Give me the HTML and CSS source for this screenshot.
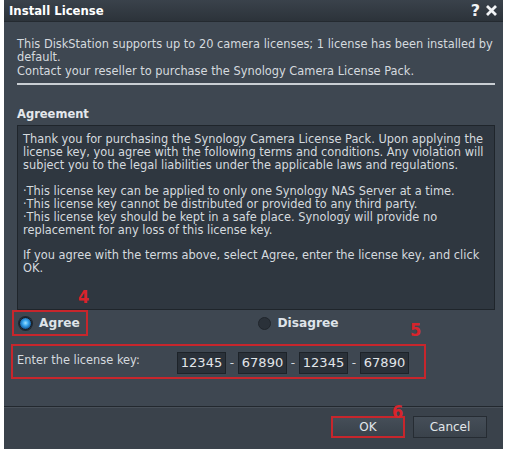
FILE: index.html
```html
<!DOCTYPE html>
<html>
<head>
<meta charset="utf-8">
<link rel="stylesheet" href="styles.css">
</head>
<body>
<div class="dialog">
  <div class="titlebar">
    <span class="title">Install License</span>
    <span class="tools"><span class="help">?</span><svg class="close" width="13" height="13" viewBox="0 0 13 13"><path d="M2 2 L11 11 M11 2 L2 11" stroke="#f2f4f6" stroke-width="2.8" stroke-linecap="butt"/></svg></span>
  </div>
  <div class="content">
    <p class="intro">This DiskStation supports up to 20 camera licenses; 1 license has been installed by default.<br>Contact your reseller to purchase the Synology Camera License Pack.</p>
    <div class="sep"></div>
    <h3 class="section">Agreement</h3>
    <div class="terms">
      <p>Thank you for purchasing the Synology Camera License Pack. Upon applying the license key, you agree with the following terms and conditions. Any violation will subject you to the legal liabilities under the applicable laws and regulations.</p>
      <p>·This license key can be applied to only one Synology NAS Server at a time.<br>·This license key cannot be distributed or provided to any third party.<br>·This license key should be kept in a safe place. Synology will provide no replacement for any loss of this license key.</p>
      <p>If you agree with the terms above, select Agree, enter the license key, and click OK.</p>
    </div>
    <div class="choices">
      <div class="choice-cell">
        <label class="choice marked"><span class="radio on"></span>Agree</label>
        <span class="step step4">4</span>
      </div>
      <div class="choice-cell">
        <label class="choice"><span class="radio"></span>Disagree</label>
      </div>
    </div>
    <div class="keyrow">
      <span class="keylabel">Enter the license key:</span>
      <div class="keys">
        <span class="key">12345</span><span class="dash">-</span><span class="key">67890</span><span class="dash">-</span><span class="key">12345</span><span class="dash">-</span><span class="key">67890</span>
      </div>
      <span class="step step5">5</span>
    </div>
  </div>
  <div class="footer">
    <div class="btnwrap">
      <button class="btn ok">OK</button>
      <span class="step step6">6</span>
    </div>
    <button class="btn">Cancel</button>
  </div>
</div>
</body>
</html>
```

FILE: styles.css
```css
html, body {
  margin: 0;
  padding: 0;
  background: #ffffff;
}
body {
  font-family: "DejaVu Sans", Tahoma, sans-serif;
  font-size: 11.4px;
  color: #d5dadf;
}
.dialog {
  margin-left: 4px;
  width: 499px;
  height: 449px;
  background: #3e4751;
  display: flex;
  flex-direction: column;
}
.titlebar {
  height: 21px;
  flex: none;
  display: flex;
  align-items: center;
  justify-content: space-between;
  padding: 0 5px 0 5px;
  background: linear-gradient(#3a424b, #2c333a);
  border-bottom: 1px solid #242a30;
}
.title {
  font-family: "DejaVu Sans Condensed", "DejaVu Sans", sans-serif;
  font-weight: bold;
  font-size: 13px;
  color: #ffffff;
}
.tools {
  display: flex;
  align-items: center;
  gap: 5px;
}
.help {
  font-weight: bold;
  font-size: 16px;
  color: #f2f4f6;
  line-height: 16px;
}
.close { display: block; }
.content {
  flex: 1;
  padding: 16px 8px 0 13px;
  position: relative;
}
.intro {
  margin: 0;
  line-height: 13.4px;
}
.sep {
  height: 2px;
  background: #c9ced3;
  margin-top: 5px;
}
.section {
  margin: 22px 0 4px;
  font-size: 11.5px;
  font-weight: bold;
  line-height: 14px;
  color: #e4e8ec;
}
.terms {
  height: 169px;
  background: #2f3740;
  border: 1px solid #1f252b;
  padding: 7px 6px 7px 5px;
  line-height: 12.9px;
  font-size: 11.4px;
}
.terms p {
  margin: 0 0 12.9px;
}
.choices {
  display: grid;
  grid-template-columns: 1fr 1fr;
  margin: 0 0 0 -5px;
}
.choice-cell {
  position: relative;
}
.choice {
  display: inline-flex;
  align-items: center;
  gap: 7px;
  height: 22px;
  padding: 0 6px 0 5px;
  border: 2px solid transparent;
  font-weight: bold;
  font-size: 12.2px;
  color: #dfe4e9;
}
.choice.marked {
  border-color: #c7262c;
}
.choice-cell + .choice-cell .choice {
  margin-left: -3px;
}
.radio {
  width: 11px;
  height: 11px;
  border-radius: 50%;
  background: #2a3139;
  border: 1px solid #20262c;
}
.radio.on {
  background: radial-gradient(circle at 50% 45%, #9ee0ff 0, #37a6ef 35%, #1a5e9e 70%);
  border-color: #141a20;
  box-shadow: 0 0 0 1px #1d2731;
}
.step {
  position: absolute;
  color: #d8242c;
  font-size: 18px;
  font-weight: bold;
  font-family: "DejaVu Sans Condensed", "DejaVu Sans", sans-serif;
  line-height: 18px;
}
.step4 { left: 66px; top: -22px; }
.keyrow {
  position: relative;
  display: flex;
  align-items: center;
  width: 403px;
  height: 31px;
  margin: 8px 0 0 -6px;
  padding: 0 4px 0 4px;
  border: 2px solid #c7262c;
}
.keylabel {
  margin-top: -4px;
  width: 160px;
}
.keys {
  display: flex;
  align-items: center;
  margin-top: 2px;
}
.key {
  width: 47px;
  height: 20px;
  line-height: 20px;
  background: #2a3139;
  border: 1px solid #1d2329;
  font-size: 13px;
  text-align: center;
  color: #e1e5e9;
}
.dash {
  width: 12px;
  text-align: center;
  font-size: 12px;
}
.step5 { left: 397px; top: -25px; }
.footer {
  height: 33px;
  flex: none;
  border-top: 1px solid #22282e;
  box-shadow: inset 0 1px 0 #485059;
  background: #3a424b;
  display: flex;
  align-items: flex-start;
  justify-content: flex-end;
  gap: 8px;
  padding: 9px 16px 0 0;
}
.btnwrap {
  position: relative;
}
.btn {
  width: 74px;
  height: 22px;
  background: linear-gradient(#454e58, #3a424b);
  border: 1px solid #262c33;
  color: #e2e6ea;
  font-family: "DejaVu Sans", Tahoma, sans-serif;
  font-size: 12px;
  padding: 0;
}
.btn.ok {
  border: 2px solid #c7262c;
}
.step6 { left: 61px; top: -13px; }
```
